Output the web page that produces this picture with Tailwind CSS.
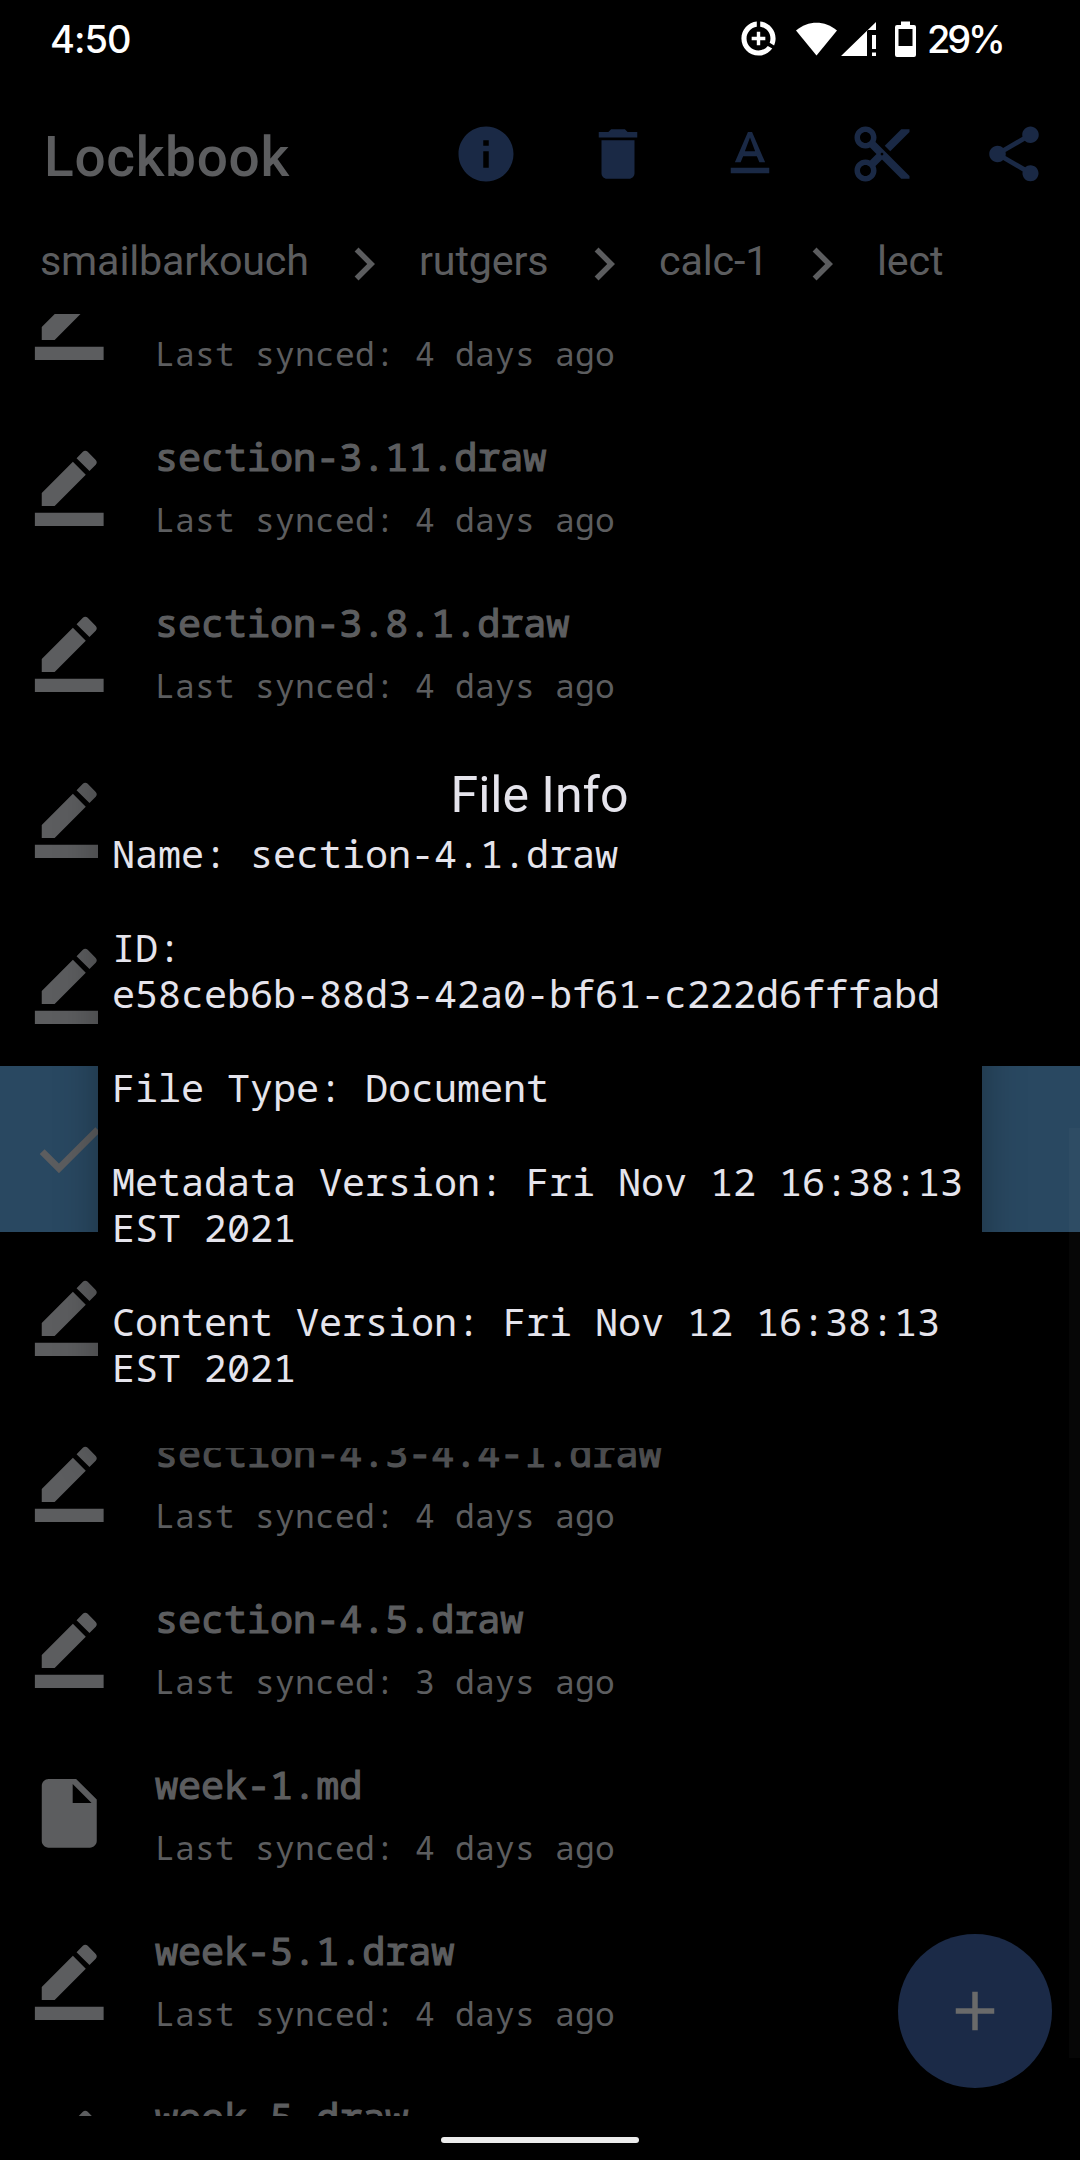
<!DOCTYPE html>
<html lang="en">
<head>
<meta charset="utf-8">
<title>Lockbook</title>
<script src="https://cdn.jsdelivr.net/npm/@tailwindcss/browser@4"></script>
</head>
<body class="bg-black">
<svg class="hidden">
  <symbol id="draw" viewBox="0 0 24 24"><path d="M22 24H2v-4h20v4zM13.06 5.19l3.75 3.75L7.75 18H4v-3.75l9.06-9.06zm4.82 2.68l-3.75-3.75 1.83-1.83c.39-.39 1.02-.39 1.41 0l2.34 2.34c.39.39.39 1.02 0 1.41l-1.83 1.83z"/></symbol>
  <symbol id="doc" viewBox="0 0 24 24"><path d="M6 2c-1.1 0-1.99.9-1.99 2L4 20c0 1.1.89 2 1.99 2H18c1.1 0 2-.9 2-2V8l-6-6H6zm7 7V3.5L18.5 9H13z"/></symbol>
  <symbol id="check" viewBox="0 0 24 24"><path d="M9 16.17L4.83 12l-1.42 1.41L9 19 21 7l-1.41-1.41z"/></symbol>
  <symbol id="chevron" viewBox="0 0 24 24"><path d="M10 6L8.59 7.41 13.17 12l-4.58 4.59L10 18l6-6z"/></symbol>
</svg>

<div class="relative flex h-[2160px] w-[1080px] flex-col overflow-hidden bg-black font-[Roboto,sans-serif] text-[#5c5d5f]">
  <!-- status bar -->
  <div class="flex h-[77px] shrink-0 items-start pl-[50px] pr-[77px] pt-[15px] font-[Inter,sans-serif] text-[38px] font-medium leading-[46px] text-white">
    <span class="mt-px tracking-[-1px]">4:50</span>
    <svg class="ml-auto mt-[3px] size-[41px] fill-white" viewBox="0 0 24 24"><path d="M11 8v3H8v2h3v3h2v-3h3v-2h-3V8h-2zm2-5.95v3.03c3.39.49 6 3.39 6 6.92 0 .9-.18 1.75-.48 2.54l2.6 1.53c.56-1.24.88-2.62.88-4.07 0-5.18-3.95-9.45-9-9.95zM12 19c-3.87 0-7-3.13-7-7 0-3.53 2.61-6.43 6-6.92V2.05c-5.06.5-9 4.76-9 9.95 0 5.52 4.47 10 9.99 10 3.31 0 6.24-1.61 8.06-4.09l-2.6-1.53C16.17 17.98 14.21 19 12 19z"/></svg>
    <svg class="ml-[17px] mt-[6px] h-[36px] w-[41px] fill-white" viewBox="0 0 41 36"><path d="M0 9.5C12-1 29-1 41 9.500L20.500 34.500z"/></svg>
    <svg class="ml-[4px] mt-[6px] h-[36px] w-[35px] fill-white" viewBox="0 0 35 36"><path d="M0 35L35 1v8h-9v26zM31 14h4v14h-4zM31 31.500h4v3.500h-4z"/></svg>
    <svg class="ml-[19px] mt-[6px] h-[37px] w-[21px] fill-white" viewBox="0 0 21 37"><path fill-rule="evenodd" d="M6 .5h9V4h4a2 2 0 0 1 2 2v28a2 2 0 0 1-2 2H2a2 2 0 0 1-2-2V6a2 2 0 0 1 2-2h4zM3.500 8v17h14V8z"/></svg>
    <span class="ml-[11px] mt-px w-[76px] whitespace-nowrap tracking-[-3.2px]">29%</span>
  </div>

  <!-- app bar -->
  <div class="flex h-[154px] shrink-0 items-center pl-[44px]">
    <h1 class="mt-[5px] w-[376px] text-[55px] font-medium leading-[64px] tracking-[0.7px]">Lockbook</h1>
    <div class="flex fill-[#1a2945]">
      <span class="flex w-[132px] justify-center"><svg class="size-[66px]" viewBox="0 0 24 24"><path d="M12 2C6.480 2 2 6.480 2 12s4.480 10 10 10 10-4.480 10-10S17.520 2 12 2zm1 15h-2v-6h2v6zm0-8h-2V7h2v2z"/></svg></span>
      <span class="flex w-[132px] justify-center"><svg class="size-[66px]" viewBox="0 0 24 24"><path d="M6 19c0 1.100.9 2 2 2h8c1.100 0 2-.9 2-2V7H6v12zM19 4h-3.500l-1-1h-5l-1 1H5v2h14V4z"/></svg></span>
      <span class="flex w-[132px] justify-center"><svg class="size-[66px]" viewBox="0 0 24 24"><path d="M5 17v2h14v-2H5zm4.500-4.200h5l.9 2.200h2.100L12.750 4h-1.500L6.500 15h2.100l.9-2.200zM12 5.980L13.870 11h-3.740L12 5.980z"/></svg></span>
      <span class="flex w-[132px] justify-center"><svg class="size-[66px]" viewBox="0 0 24 24"><path d="M9.640 7.640c.23-.5.360-1.050.360-1.640 0-2.210-1.790-4-4-4S2 3.790 2 6s1.790 4 4 4c.59 0 1.140-.13 1.640-.36L10 12l-2.360 2.360C7.140 14.130 6.590 14 6 14c-2.210 0-4 1.790-4 4s1.790 4 4 4 4-1.790 4-4c0-.59-.13-1.140-.36-1.640L12 14l7 7h3v-1L9.640 7.640zM6 8c-1.100 0-2-.89-2-2s.9-2 2-2 2 .89 2 2-.9 2-2 2zm0 12c-1.100 0-2-.89-2-2s.9-2 2-2 2 .89 2 2-.9 2-2 2zm6-7.500c-.28 0-.5-.22-.5-.5s.22-.5.5-.5.5.22.5.5-.22.5-.5.5zM19 3l-6 6 2 2 7-7V3z"/></svg></span>
      <span class="flex w-[132px] justify-center"><svg class="size-[66px]" viewBox="0 0 24 24"><path d="M18 16.080c-.76 0-1.440.3-1.960.77L8.910 12.700c.05-.23.090-.46.090-.7s-.04-.47-.09-.7l7.050-4.110c.54.5 1.250.81 2.040.81 1.660 0 3-1.340 3-3s-1.340-3-3-3-3 1.340-3 3c0 .24.040.47.090.7L8.040 9.810C7.500 9.310 6.790 9 6 9c-1.660 0-3 1.340-3 3s1.340 3 3 3c.79 0 1.500-.31 2.040-.81l7.120 4.160c-.05.21-.08.43-.08.65 0 1.610 1.310 2.920 2.920 2.920 1.610 0 2.920-1.310 2.920-2.920s-1.310-2.920-2.920-2.920z"/></svg></span>
    </div>
  </div>

  <!-- breadcrumbs -->
  <div class="flex h-[83px] shrink-0 items-start pl-[40px] text-[41.25px] leading-[60px] tracking-[-0.17px]">
    <span class="w-[291px]">smailbarkouch</span><svg class="size-[66px] fill-current"><use href="#chevron"/></svg>
    <span class="ml-[22px] w-[152px]">rutgers</span><svg class="size-[66px] fill-current"><use href="#chevron"/></svg>
    <span class="ml-[22px] w-[130px]">calc-1</span><svg class="size-[66px] fill-current"><use href="#chevron"/></svg>
    <span class="ml-[22px]">lect</span>
  </div>

  <!-- file list -->
  <div class="relative h-[1802px] shrink-0 overflow-hidden">
    <div id="files" class="-mt-[78px] flex flex-col"></div>
    <div class="absolute right-0 top-[814px] h-[930px] w-[11px] bg-white/[0.025]"></div>
    <div class="absolute left-[898px] top-[1620px] flex size-[154px] items-center justify-center rounded-full bg-[#1b2a47]">
      <svg class="size-[66px] fill-[#6a6a6a]" viewBox="0 0 24 24"><path d="M19 13h-6v6h-2v-6H5v-2h6V5h2v6h6v2z"/></svg>
    </div>
  </div>

  <!-- gesture bar -->
  <div class="mx-auto mt-[21px] h-[6px] w-[198px] rounded-full bg-[#ececec]"></div>

  <!-- dialog -->
  <div class="absolute left-[98px] top-[745px] h-[703px] w-[884px] rounded-[3px] bg-black pl-[14px] pt-[21px] text-[#e5e4ec] shadow-[0_12px_44px_rgba(0,0,0,0.3)]">
    <h2 class="-ml-[15px] mb-[6px] text-center text-[50px] leading-[58px]">File Info</h2>
    <div class="flex flex-col gap-[48px] font-['Noto_Sans_Mono','DejaVu_Sans_Mono',monospace] text-[38.5px] leading-[46px] tracking-[-0.1px]">
      <p>Name: section-4.1.draw</p>
      <p>ID:<br>e58ceb6b-88d3-42a0-bf61-c222d6fffabd</p>
      <p>File Type: Document</p>
      <p>Metadata Version: Fri Nov 12 16:38:13<br>EST 2021</p>
      <p>Content Version: Fri Nov 12 16:38:13<br>EST 2021</p>
    </div>
  </div>
</div>

<script>
  const files = [
    ["draw", "", "4 days"],
    ["draw", "section-3.11.draw", "4 days"],
    ["draw", "section-3.8.1.draw", "4 days"],
    ["draw"], ["draw"], ["check"], ["draw"],
    ["draw", "section-4.3-4.4-1.draw", "4 days"],
    ["draw", "section-4.5.draw", "3 days"],
    ["doc", "week-1.md", "4 days"],
    ["draw", "week-5.1.draw", "4 days"],
    ["draw", "week-5.draw", ""],
  ];
  document.getElementById("files").innerHTML = files.map(([icon, name, age]) => `
    <div class="flex h-[166px] shrink-0 pl-[28px] ${icon === "check" ? "bg-[#294861]" : ""}">
      <svg class="mt-[41.5px] size-[82.5px] shrink-0 fill-current"><use href="#${icon}"/></svg>
      <div class="ml-[44.5px] whitespace-nowrap pt-[31px] font-['Noto_Sans_Mono','DejaVu_Sans_Mono',monospace]">
        <div class="h-[46px] text-[38.5px] leading-[46px] tracking-[-0.08px] [-webkit-text-stroke:1.2px_#5c5d5f]">${name || ""}</div>
        <div class="mt-[21px] text-[33px] leading-[40px] tracking-[0.2px]">${age ? "Last synced: " + age + " ago" : ""}</div>
      </div>
    </div>`).join("");
</script>
</body>
</html>
